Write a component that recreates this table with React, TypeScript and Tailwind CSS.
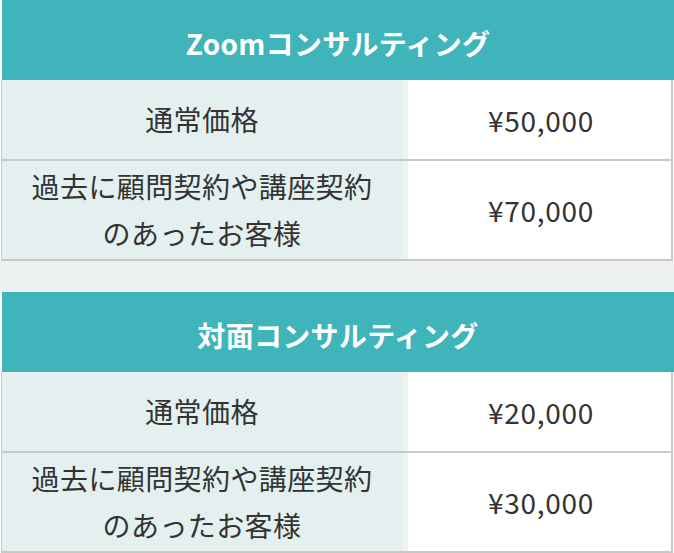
import React from "react";

type Row = { label: string[]; price: string; tall?: boolean };

const plans: { title: string; rows: Row[] }[] = [
  {
    title: "Zoomコンサルティング",
    rows: [
      { label: ["通常価格"], price: "¥50,000" },
      { label: ["過去に顧問契約や講座契約", "のあったお客様"], price: "¥70,000", tall: true },
    ],
  },
  {
    title: "対面コンサルティング",
    rows: [
      { label: ["通常価格"], price: "¥20,000" },
      { label: ["過去に顧問契約や講座契約", "のあったお客様"], price: "¥30,000", tall: true },
    ],
  },
];

const PriceTable = ({ title, rows }: { title: string; rows: Row[] }) => (
  <div>
    <div className="ml-[2px] flex h-[80px] items-center justify-center bg-[#3fb4bb] pt-[6px] text-[28px] font-bold tracking-[0.3px] text-white">
      {title}
    </div>
    {rows.map((row, i) => (
      <div
        key={i}
        className={`ml-[1px] mr-px flex border-b-2 border-l border-r-2 border-[#c8c8c8] ${row.tall ? "h-[100px]" : "h-[81px]"}`}
      >
        <div className="flex w-[400px] flex-col items-center justify-center bg-[#e4f0f0] text-[28px] leading-[47px] tracking-[0.4px] text-[#333]">
          {row.label.map((l) => (
            <span key={l}>{l}</span>
          ))}
        </div>
        <div className="w-[6px] bg-[#edf2f0]" />
        <div className="flex flex-1 items-center justify-center bg-white pl-[3px] text-[28px] tracking-[0.7px] text-[#333]">
          {row.price}
        </div>
      </div>
    ))}
  </div>
);

const App = () => {
  return (
    <div
      className="min-h-screen w-[674px] overflow-hidden bg-white"
      style={{ fontFamily: '"Noto Sans CJK JP", "Noto Sans", sans-serif' }}
    >
      <PriceTable {...plans[0]} />
      <div className="h-[31px] bg-[#edf1f0]" />
      <PriceTable {...plans[1]} />
    </div>
  );
};

export default App;
